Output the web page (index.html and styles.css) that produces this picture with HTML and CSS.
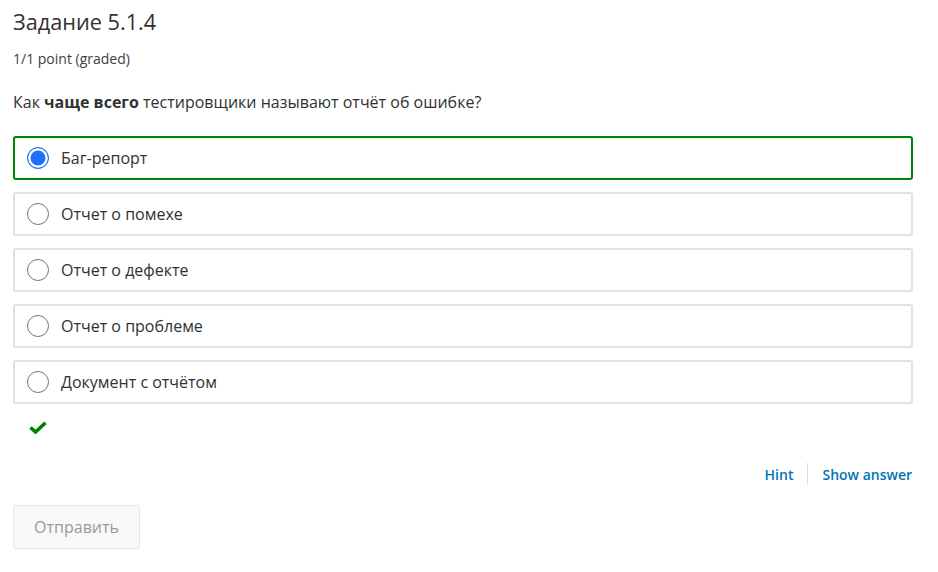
FILE: index.html
```html
<!DOCTYPE html>
<html lang="ru">
<head>
  <meta charset="UTF-8">
  <meta name="viewport" content="width=device-width, initial-scale=1.0">
  <title>Задание 5.1.4</title>
  <link rel="stylesheet" href="styles.css">
</head>
<body>
  <div class="problem">
    <h3 class="problem-title">Задание 5.1.4</h3>
    <div class="problem-progress">1/1 point (graded)</div>

    <p class="question">Как <strong>чаще всего</strong> тестировщики называют отчёт об ошибке?</p>

    <div class="choices">
      <label class="choice choice-correct">
        <span class="radio radio-checked"></span>
        <span>Баг-репорт</span>
      </label>
      <label class="choice">
        <span class="radio"></span>
        <span>Отчет о помехе</span>
      </label>
      <label class="choice">
        <span class="radio"></span>
        <span>Отчет о дефекте</span>
      </label>
      <label class="choice">
        <span class="radio"></span>
        <span>Отчет о проблеме</span>
      </label>
      <label class="choice">
        <span class="radio"></span>
        <span>Документ с отчётом</span>
      </label>
    </div>

    <div class="status">
      <svg width="18" height="13" viewBox="0 0 18 13">
        <path d="M1.5 6.5 L6.5 11 L16.5 1.8" fill="none" stroke="#008100" stroke-width="3.6" stroke-linejoin="miter"/>
      </svg>
    </div>

    <div class="actions">
      <a href="#" class="action-link">Hint</a>
      <span class="divider"></span>
      <a href="#" class="action-link">Show answer</a>
    </div>

    <button class="submit-btn" disabled>Отправить</button>
  </div>
</body>
</html>
```

FILE: styles.css
```css
body {
  margin: 0;
  padding: 0;
  font-family: 'Open Sans', 'Noto Sans', sans-serif;
  color: #313131;
  background: #fff;
}

.problem {
  padding: 6px 25px 0 13px;
}

.problem-title {
  margin: 0;
  font-size: 21.7px;
  font-weight: 400;
  line-height: 32px;
  color: #313131;
}

.problem-progress {
  margin-top: 12px;
  font-size: 14px;
  line-height: 18px;
  color: #414141;
}

.question {
  margin: 22px 0 0;
  font-size: 16px;
  line-height: 24px;
}

.question strong {
  font-weight: 700;
}

.choices {
  display: flex;
  flex-direction: column;
  gap: 12px;
  margin-top: 22px;
}

.choice {
  display: flex;
  align-items: center;
  gap: 12px;
  height: 44px;
  box-sizing: border-box;
  padding: 0 12px;
  border: 2px solid #e2e2e2;
  border-radius: 3px;
  font-size: 16px;
  color: #313131;
  cursor: pointer;
}

.choice-correct {
  border-color: #008100;
}

.radio {
  width: 22px;
  height: 22px;
  box-sizing: border-box;
  border: 1px solid #767676;
  border-radius: 50%;
  background: #fff;
  flex-shrink: 0;
}

.radio-checked {
  border: 1.5px solid #1a73e8;
  box-shadow: inset 0 0 0 2.5px #fff;
  background: #1f6fff;
}

.status {
  margin: 13px 0 0 16px;
  height: 18px;
}

.actions {
  display: flex;
  justify-content: flex-end;
  align-items: center;
  gap: 14px;
  margin-top: 28px;
  padding-right: 1px;
}

.action-link {
  font-size: 14px;
  font-weight: 600;
  color: #0075b4;
  text-decoration: none;
}

.divider {
  width: 1px;
  height: 22px;
  background: #ddd;
}

.submit-btn {
  margin-top: 20px;
  width: 127px;
  height: 44px;
  font-family: 'Open Sans', 'Noto Sans', sans-serif;
  font-size: 16px;
  color: #9a9a9a;
  background: #f7f8f8;
  border: 1px solid #e7e7e7;
  border-radius: 3px;
}
```
